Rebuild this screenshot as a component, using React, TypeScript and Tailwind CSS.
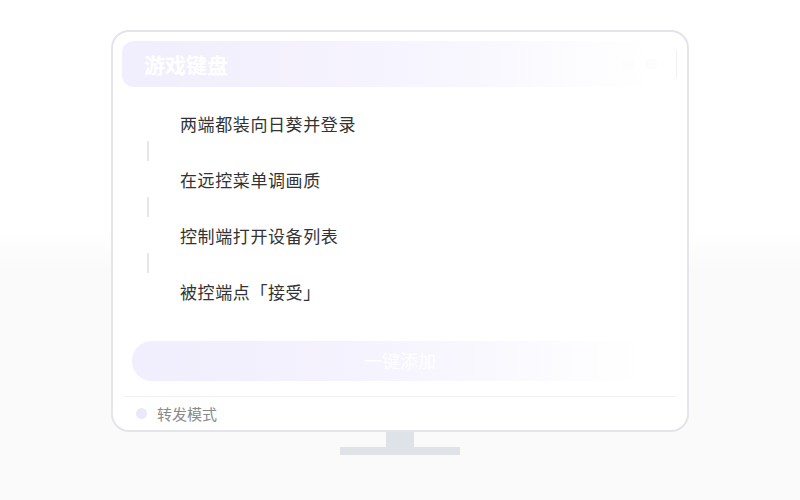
import React from 'react';

const steps = ['两端都装向日葵并登录', '在远控菜单调画质', '控制端打开设备列表', '被控端点「接受」'];

const font = { fontFamily: '"Noto Sans CJK SC", "Noto Sans", sans-serif' };

const App = () => {
    return (
        <div
            className="w-[800px] h-[500px] flex flex-col items-center pt-[30px] bg-[linear-gradient(to_bottom,#ffffff_0px,#ffffff_230px,#fafafa_270px,#fafafa_100%)]"
            style={font}
        >
            <div className="w-[578px] h-[402px] rounded-[18px] border-2 border-[#e3e5ea] bg-white flex flex-col px-[9px] pt-[9px]">
                <div className="h-[46px] rounded-[12px] flex items-center justify-between pl-[22px] pr-[1px] bg-[linear-gradient(to_right,#f1eefd_0%,#f6f4fe_50%,#ffffff_95%)]">
                    <span className="text-white text-[21px] font-bold leading-none">游戏键盘</span>
                    <div className="flex items-center gap-[12px] h-full">
                        <span className="w-[12px] h-[10px] rounded-[3px] bg-[#fdfdfe]" />
                        <span className="w-[12px] h-[10px] rounded-[3px] bg-[#fdfdfe]" />
                        <span className="w-[1px] h-[28px] bg-[#f0f1f5] ml-[6px]" />
                    </div>
                </div>

                <div className="flex flex-col pl-[26px] pt-[25px]">
                    {steps.map((s, i) => (
                        <div key={s} className="flex flex-col">
                            <div className="h-[22px] flex items-center pl-[32px] text-[17px] tracking-[0.6px] text-[#333333] leading-none">{s}</div>
                            {i < steps.length - 1 && (
                                <div className="h-[34px] flex items-center">
                                    <span className="ml-[-1px] w-[2px] h-[20px] bg-[#e4e6eb]" />
                                </div>
                            )}
                        </div>
                    ))}
                </div>

                <div className="mt-[39px] mx-[10px] h-[40px] rounded-full flex items-center justify-center bg-[linear-gradient(to_right,#f1eefd_0%,#f5f3fe_45%,#ffffff_95%)]">
                    <span className="text-white text-[18px] leading-none mb-[3px]">一键添加</span>
                </div>

                <div className="mt-[15px] mx-[1px] border-t border-[#eef0f3] flex items-center h-[33px] pl-[13px] gap-[10px]">
                    <span className="w-[11px] h-[11px] rounded-full bg-[#ebe8fc]" />
                    <span className="text-[15px] text-[#8a8a8a] leading-none">转发模式</span>
                </div>
            </div>
            <div className="w-[28px] h-[15px] bg-[#dfe3e8]" />
            <div className="w-[120px] h-[8px] bg-[#dfe3e8]" />
        </div>
    );
};

export default App;
